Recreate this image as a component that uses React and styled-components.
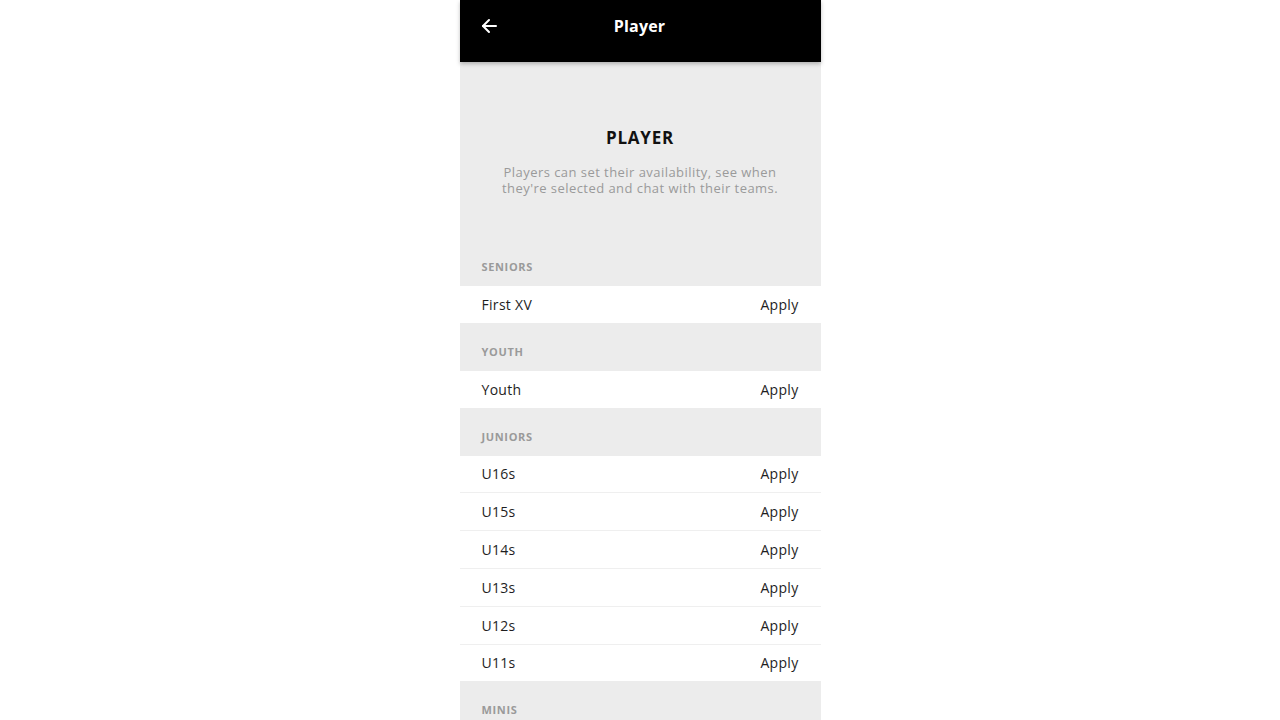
import styled, { createGlobalStyle } from "styled-components";

const GlobalStyle = createGlobalStyle`
body {
  margin: 0;
  background: #ffffff;
  font-family: "Open Sans", "Liberation Sans", sans-serif;
  overflow: hidden;
}
`

const Phone = styled.div`
width: 361px;
margin: 0 auto;
background: #ececec;
min-height: 720px;
`

const TopBar = styled.header`
position: relative;
z-index: 1;
display: flex;
align-items: center;
height: 62px;
padding: 0 22px;
background: #000000;
color: #ffffff;
box-shadow: 0 2px 4px rgba(0, 0, 0, 0.25);
`

const BackButton = styled.button`
display: flex;
align-items: center;
width: 16px;
height: 18px;
margin: -10px 0 0 -1px;
padding: 0;
border: none;
background: none;
color: #ffffff;
`

const BarTitle = styled.h1`
flex: 1;
margin: -10px 16px 0 0;
text-align: center;
font-size: 16px;
font-weight: 700;
letter-spacing: 0.2px;
`

const Intro = styled.section`
padding: 64px 30px 0;
text-align: center;
`

const Heading = styled.h2`
margin: 0;
font-size: 17px;
font-weight: 700;
letter-spacing: 0.8px;
color: #111111;
`

const Blurb = styled.p`
margin: 15px 0 0;
font-size: 13px;
line-height: 16px;
letter-spacing: 0.45px;
color: #9a9a9a;
`

const GroupLabel = styled.div`
display: flex;
align-items: flex-end;
height: ${p => p.$first ? 42 : 48}px;
padding: 0 22px 12px;
box-sizing: border-box;
font-size: 11px;
font-weight: 700;
letter-spacing: 0.65px;
color: #9a9a9a;
margin-top: ${p => p.$first ? 48 : 0}px;
`

const Row = styled.div`
display: flex;
align-items: center;
justify-content: space-between;
height: 36.8px;
padding: 0 22px;
background: #ffffff;
border-top: ${p => p.$divider ? "1px solid #efefef" : "none"};
font-size: 14px;
letter-spacing: 0.3px;
color: #1e1e1e;
`

const ApplyLink = styled.a`
color: #1e1e1e;
text-decoration: none;
cursor: pointer;
`

const groups = [
  { name: "SENIORS", teams: ["First XV"] },
  { name: "YOUTH", teams: ["Youth"] },
  { name: "JUNIORS", teams: ["U16s", "U15s", "U14s", "U13s", "U12s", "U11s"] },
  { name: "MINIS", teams: ["U10s", "U9s"] },
];

const App = () => {
  return (
    <>
      <GlobalStyle />
      <Phone>
        <TopBar>
          <BackButton aria-label="Back">
            <svg width="16" height="16" viewBox="0 0 16 16" fill="none" stroke="currentColor" strokeWidth="2" strokeLinecap="round" strokeLinejoin="round">
              <path d="M15 8H2" />
              <path d="M8 2L2 8l6 6" />
            </svg>
          </BackButton>
          <BarTitle>Player</BarTitle>
        </TopBar>
        <Intro>
          <Heading>PLAYER</Heading>
          <Blurb>Players can set their availability, see when<br />they're selected and chat with their teams.</Blurb>
        </Intro>
        {groups.map((g, gi) => (
          <div key={g.name}>
            <GroupLabel $first={gi === 0}>{g.name}</GroupLabel>
            {g.teams.map((t, i) => (
              <Row key={t} $divider={i > 0}>
                <span>{t}</span>
                <ApplyLink>Apply</ApplyLink>
              </Row>
            ))}
          </div>
        ))}
      </Phone>
    </>
  )
}

export default App
